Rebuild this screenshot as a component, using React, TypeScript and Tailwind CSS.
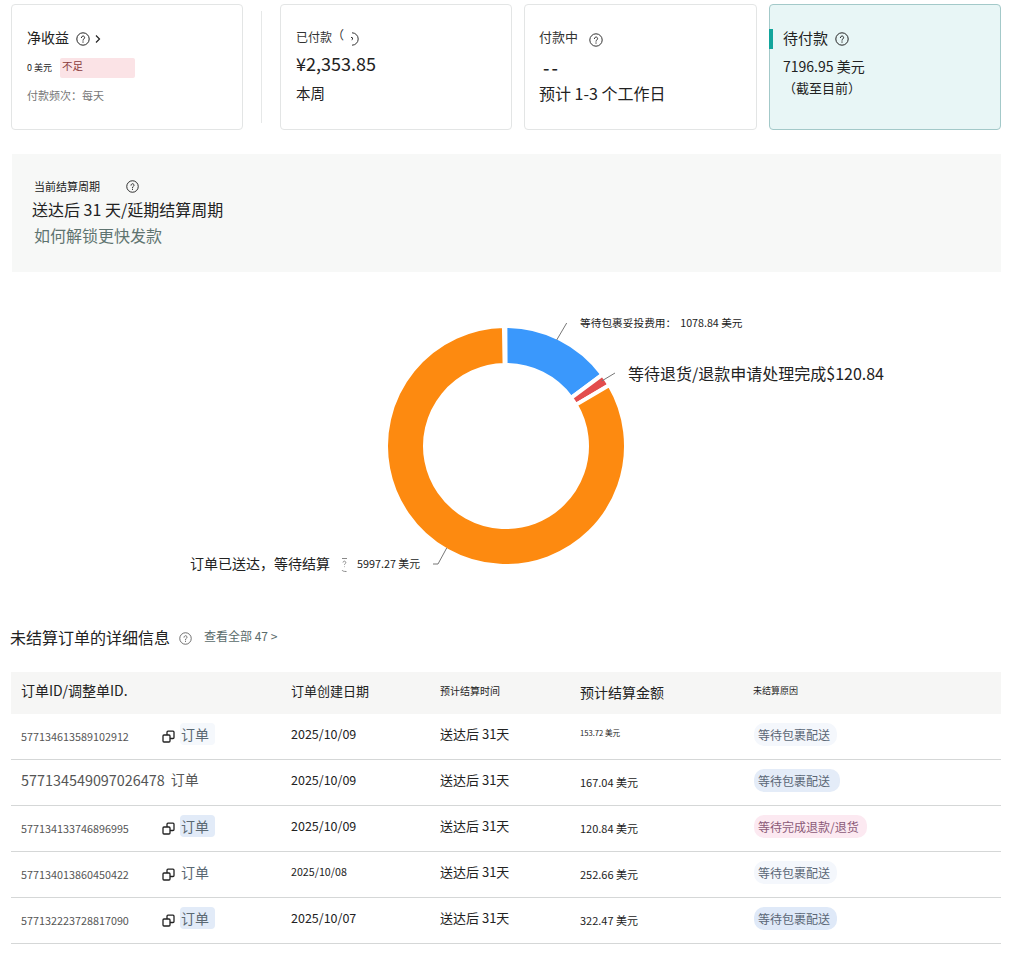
const font = { fontFamily: '"Noto Sans CJK SC", "Noto Sans", sans-serif' };

function QIcon({ size = 14, className = '' }: { size?: number; className?: string }) {
  return (
    <svg width={size} height={size} viewBox="0 0 14 14" fill="none" stroke="currentColor" className={`shrink-0 ${className}`}>
      <circle cx="7" cy="7" r="6.2" strokeWidth="1" />
      <path d="M5.4 5.6a1.6 1.6 0 1 1 2.5 1.3c-.6.4-.9.7-.9 1.3" strokeWidth="1" strokeLinecap="round" />
      <path d="M7 9.8v.5" strokeWidth="1" strokeLinecap="round" />
    </svg>
  );
}

// half covered icon, only the right side of the ring shows
function CutIcon() {
  return (
    <svg width="14" height="14" viewBox="0 0 14 14" fill="none" stroke="#333" className="shrink-0">
      <path d="M7 .8a6.2 6.2 0 0 1 0 12.4" strokeWidth="1" />
      <path d="M6 5.4a1.4 1.4 0 0 1 1.6 1.6c-.2.5-.6.7-.7 1.2" strokeWidth="1" />
    </svg>
  );
}

// what is left of the help icon in the chart labels
function IconScrap() {
  return (
    <svg width="7" height="16" viewBox="0 0 7 16" fill="none" stroke="#888" strokeWidth="1" className="shrink-0">
      <path d="M1 1.5h5" />
      <path d="M2 5.5a1.4 1.4 0 1 1 2.2 1.2c-.5.3-.7.6-.7 1.1" />
      <path d="M3.5 9.5v.6" />
      <path d="M1 13c.5 1 1.5 1.5 4.5 1.5" />
    </svg>
  );
}

function CopyIcon() {
  return (
    <svg width="13" height="13" viewBox="0 0 13 13" fill="none" stroke="#222" strokeWidth="1.3" className="shrink-0">
      <rect x="1" y="5" width="7" height="7" rx="1" />
      <path d="M5 5V2.2a1 1 0 0 1 1-1h5a1 1 0 0 1 1 1v5.3a1 1 0 0 1-1 1H8" />
    </svg>
  );
}

function wedge(cx: number, cy: number, r1: number, r2: number, from: number, to: number) {
  const pt = (r: number, a: number) => {
    const t = (a * Math.PI) / 180;
    return `${(cx + r * Math.sin(t)).toFixed(2)} ${(cy - r * Math.cos(t)).toFixed(2)}`;
  };
  const large = to - from > 180 ? 1 : 0;
  return `M${pt(r2, from)} A${r2} ${r2} 0 ${large} 1 ${pt(r2, to)} L${pt(r1, to)} A${r1} ${r1} 0 ${large} 0 ${pt(r1, from)} Z`;
}

function Card({ className = '', children }: { className?: string; children: React.ReactNode }) {
  return <div className={`h-[126px] rounded-[4px] border ${className}`}>{children}</div>;
}

const plain = 'border-[#e3e5e5] bg-white';

const rows = [
  { id: '577134613589102912', copy: true, tag: 'bg-[#f5f8fc]', date: '2025/10/09', amount: '153.72 美元', amountCls: 'pb-[8px] text-[7.6px]', reason: '等待包裹配送', badge: 'bg-[#f4f7fc] pr-[7px]' },
  { id: '577134549097026478', copy: false, tag: '', date: '2025/10/09', amount: '167.04 美元', amountCls: 'text-[11px]', reason: '等待包裹配送', badge: 'bg-[#e4ecf8] pr-[10px]' },
  { id: '577134133746896995', copy: true, tag: 'bg-[#e2ebf8]', date: '2025/10/09', amount: '120.84 美元', amountCls: 'text-[11px]', reason: '等待完成退款/退货', badge: 'bg-[#fce9f1] pr-[8px] text-[#8b5a78]' },
  { id: '577134013860450422', copy: true, tag: '', date: '2025/10/08', amount: '252.66 美元', amountCls: 'text-[11px]', reason: '等待包裹配送', badge: 'bg-[#f4f7fc] pr-[7px]' },
  { id: '577132223728817090', copy: true, tag: 'bg-[#e2ebf8]', date: '2025/10/07', amount: '322.47 美元', amountCls: 'text-[11px]', reason: '等待包裹配送', badge: 'bg-[#dfe9f8] pr-[7px]' },
];

const cols = 'grid grid-cols-[280px_149px_140px_173px_1fr] items-center';

export default function App() {
  return (
    <div style={font} className="min-h-[974px] w-[1025px] bg-white pl-[11px] pt-[4px] text-[#222]">
      <div className="w-[990px]">
        {/* top cards */}
        <div className="flex">
          <Card className={`w-[232px] pl-[15px] pt-[20px] ${plain}`}>
            <div className="flex h-[24px] items-center text-[14px] leading-none">
              净收益
              <QIcon className="ml-[7px] mt-[3px]" />
              <svg width="8" height="10" viewBox="0 0 8 10" fill="none" stroke="#222" strokeWidth="1.2" className="ml-[4px] mt-[3px]">
                <path d="M2 1.5 5.5 5 2 8.5" />
              </svg>
            </div>
            <div className="mt-[9px] flex h-[20px] items-center text-[9px]">
              <span>0 美元</span>
              <span className="ml-[8px] flex h-[20px] w-[75px] items-start rounded-[2px] bg-[#fbe3e6] pl-[2px] text-[10.5px] leading-[15px] text-[#8a3b3b]">不足</span>
            </div>
            <div className="mt-[8px] text-[11px] leading-[18px] text-[#777]">付款频次：每天</div>
          </Card>
          <div className="ml-[18px] mt-[7px] h-[112px] w-px bg-[#e6e8e8]" />
          <Card className={`ml-[18px] w-[232px] pl-[15px] pt-[22px] ${plain}`}>
            <div className="flex h-[20px] items-center text-[12px] text-[#333]">
              已付款
              <span className="-mt-[4px]">（</span>
              <span className="ml-px mt-[3px]"><CutIcon /></span>
            </div>
            <div className="mt-[2px] text-[18px] leading-[28px]">¥2,353.85</div>
            <div className="mt-[4px] text-[14.5px] leading-[24px]">本周</div>
          </Card>
          <Card className={`ml-[12px] w-[233px] pl-[14px] pt-[22px] ${plain}`}>
            <div className="flex h-[20px] items-center text-[13px] text-[#333]">
              付款中
              <QIcon className="ml-[11px] mt-[5px]" />
            </div>
            <div className="ml-[4px] mt-[6px] text-[18px] font-medium leading-[28px] tracking-[2px]">--</div>
            <div className="text-[16px] leading-[24px]">预计 1-3 个工作日</div>
          </Card>
          <Card className="relative ml-[12px] w-[232px] border-[#a3c9c9] bg-[#e8f6f6] pl-[13px] pt-[23px]">
            <div className="absolute -left-px top-[24px] h-[20px] w-[4px] bg-[#12a59c]" />
            <div className="flex h-[20px] items-center text-[15px]">
              待付款
              <QIcon className="ml-[7px] mt-[2px]" />
            </div>
            <div className="mt-[8px] text-[14px] leading-[20px]">7196.95 美元</div>
            <div className="mt-px text-[13px] leading-[22px]">（截至目前）</div>
          </Card>
        </div>

        {/* settlement cycle */}
        <div className="ml-px mt-[24px] h-[118px] bg-[#f7f8f7] pl-[20px] pt-[24px]">
          <div className="flex h-[16px] items-center pl-[2px] text-[11px]">
            <span className="w-[92px]">当前结算周期</span>
            <QIcon size={13} />
          </div>
          <div className="mt-[3px] text-[16px] leading-[24px]">送达后 31 天/延期结算周期</div>
          <div className="ml-[2px] mt-px text-[16px] leading-[26px] text-[#5f7470]">如何解锁更快发款</div>
        </div>

        {/* donut */}
        <div className="relative h-[353px]">
          <svg viewBox="0 0 990 353" width="990" height="353" fill="none">
            <path d={wedge(495, 174, 81, 120, -0.3, 53.5)} fill="#3a98fc" stroke="#fff" strokeWidth="4" />
            <path d={wedge(495, 174, 81, 120, 53.5, 59.5)} fill="#e34d4d" stroke="#fff" strokeWidth="4" />
            <path d={wedge(495, 174, 81, 120, 59.5, 359)} fill="#fd8a10" stroke="#fff" strokeWidth="4" />
            <path d="M545.7 68 555.7 51" stroke="#777" />
            <path d="M590.7 109 604 101" stroke="#777" />
            <path d="M435.7 276 427 292H422" stroke="#777" />
          </svg>
          <div className="absolute left-[569px] top-[43px] flex h-[16px] items-center whitespace-nowrap text-[10.7px]">
            等待包裹妥投费用：
            <span className="ml-[4px]">1078.84 美元</span>
          </div>
          <div className="absolute left-[617px] top-[89px] whitespace-nowrap text-[16px] leading-[24px]">
            等待退货/退款申请处理完成$120.84
          </div>
          <div className="absolute left-[179px] top-[280px] flex h-[22px] items-center whitespace-nowrap text-[14px]">
            订单已送达，等待结算
            <span className="ml-[11px] mt-[3px]"><IconScrap /></span>
            <span className="ml-[9px] text-[10.8px]">5997.27 美元</span>
          </div>
        </div>

        {/* table title */}
        <div className="-ml-px flex h-[24px] items-center">
          <span className="text-[16px]">未结算订单的详细信息</span>
          <QIcon size={13} className="ml-[9px] mt-[2px] text-[#666]" />
          <span className="mb-[2px] ml-[12px] text-[12px] text-[#5a6b6b]">查看全部 47 &gt;</span>
        </div>

        {/* table */}
        <div className={`${cols} mt-[23px] h-[42px] bg-[#f6f6f5]`}>
          <div className="pb-[6px] pl-[10px] text-[14px]">订单ID/调整单ID.</div>
          <div className="pb-[4px] text-[13px]">订单创建日期</div>
          <div className="pb-[6px] text-[10px]">预计结算时间</div>
          <div className="pb-[2px] text-[14px]">预计结算金额</div>
          <div className="pb-[4px] text-[9px]">未结算原因</div>
        </div>
        {rows.map(r => (
          <div key={r.id} className={`${cols} h-[46px] border-b border-[#d5d7d7] first:h-[45px]`}>
            {r.copy ? (
              <div className="flex items-center pl-[10px]">
                <span className="w-[141px] text-[10.8px] text-[#555]">{r.id}</span>
                <CopyIcon />
                <span className={`mb-[6px] ml-[5px] w-[35px] rounded-[4px] pl-px text-[14px] leading-[22px] text-[#5a6872] ${r.tag}`}>订单</span>
              </div>
            ) : (
              <div className="flex items-center pb-[6px] pl-[10px]">
                <span className="text-[14.4px] text-[#555]">{r.id}</span>
                <span className="ml-[6px] text-[14px] text-[#555]">订单</span>
              </div>
            )}
            <div className={`pb-[4px] ${r.date === '2025/10/08' ? 'text-[10.7px]' : 'text-[12.5px]'}`}>{r.date}</div>
            <div className="pb-[5px] text-[13px]">送达后 31天</div>
            <div className={r.amountCls}>{r.amount}</div>
            <div className="flex pb-[4px] pl-px">
              <span className={`rounded-[10px] pl-[4px] text-[12px] leading-[23px] text-[#5a6675] ${r.badge}`}>{r.reason}</span>
            </div>
          </div>
        ))}
      </div>
    </div>
  );
}
